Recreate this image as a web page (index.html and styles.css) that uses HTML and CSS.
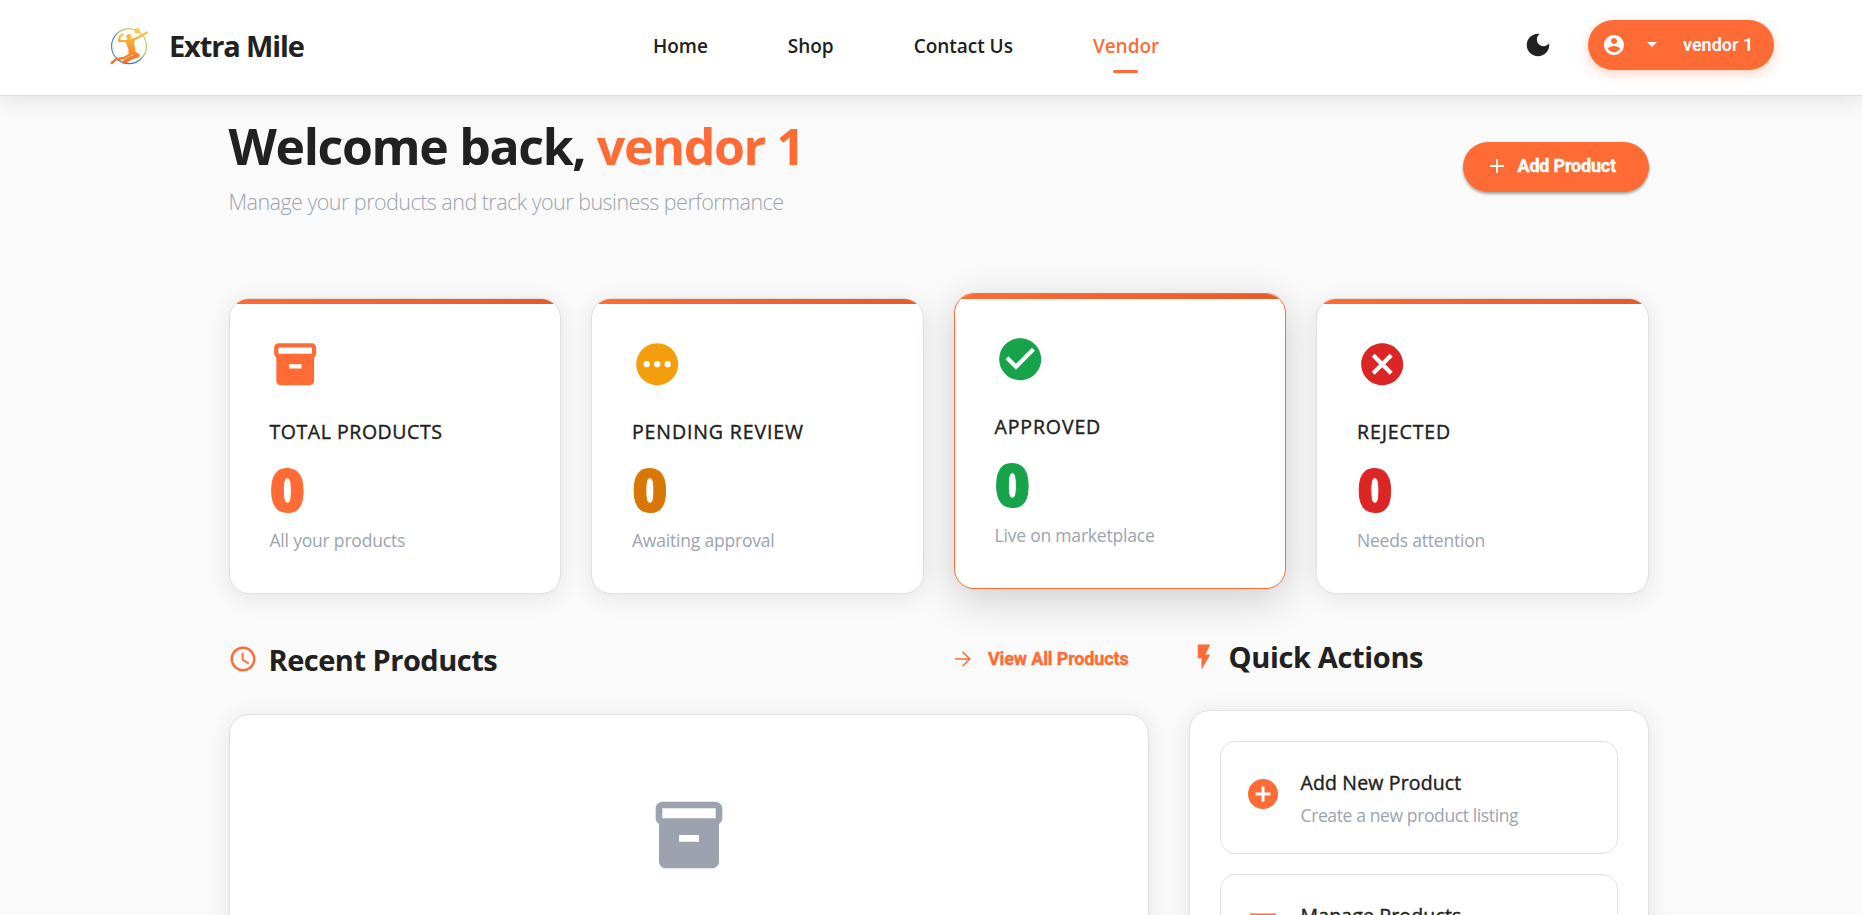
FILE: index.html
```html
<!DOCTYPE html>
<html lang="en">
<head>
<meta charset="utf-8">
<title>Extra Mile</title>
<link rel="stylesheet" href="styles.css">
</head>
<body>
<header class="topbar">
  <div class="brand">
    <svg class="brand-logo" viewBox="0 0 40 40" width="40" height="40">
      <defs>
        <linearGradient id="ring" x1="1" y1="0" x2="0" y2="1"><stop offset="0" stop-color="#f3c545"/><stop offset=".4" stop-color="#a9b060"/><stop offset=".6" stop-color="#3f6fb0"/><stop offset="1" stop-color="#4d83c9"/></linearGradient>
        <linearGradient id="body" gradientUnits="userSpaceOnUse" x1="0" y1="2" x2="0" y2="38"><stop offset="0" stop-color="#fbd04e"/><stop offset=".5" stop-color="#f99c32"/><stop offset="1" stop-color="#f56f24"/></linearGradient>
      </defs>
      <circle cx="20" cy="20.200" r="17.400" fill="none" stroke="url(#ring)" stroke-width="1.100"/>
      <g fill="url(#body)" stroke="url(#body)" stroke-linecap="round" stroke-linejoin="round">
        <circle cx="28.300" cy="4.700" r="2.700" stroke="none"/>
        <circle cx="19.800" cy="10.600" r="2.500" stroke="none"/>
        <path d="M25 13.500L31.500 10 38 6.500M18 15L10 14.800l.8-4.300 2.500-2" fill="none" stroke-width="2.200"/>
        <path d="M16.500 14.500L25.500 12.500l-1 6 1.500 8-5.500 3-.5-7z" stroke-width="1.400"/>
        <path d="M23 26l6 3.500-7.500 2.500-6.500 4.300" fill="none" stroke-width="3.800"/>
        <path d="M21 28.500L15 32l-8 1.300-4.300 3.700" fill="none" stroke-width="2.400"/>
      </g>
    </svg>
    <span class="brand-name">Extra Mile</span>
  </div>
  <nav class="nav">
    <a class="nav-link">Home</a><a class="nav-link">Shop</a><a class="nav-link">Contact Us</a><a class="nav-link active">Vendor</a>
  </nav>
  <div class="tools">
    <svg class="moon" viewBox="0 0 24 24"><path d="M12 3c-4.970 0-9 4.030-9 9s4.030 9 9 9 9-4.030 9-9c0-.46-.04-.92-.1-1.360-.98 1.370-2.580 2.260-4.400 2.260-2.980 0-5.400-2.420-5.400-5.400 0-1.810.89-3.420 2.260-4.400-.44-.06-.9-.1-1.360-.1z"/></svg>
    <button class="pill user">
      <svg class="user-icon" viewBox="0 0 24 24"><path d="M12 2C6.480 2 2 6.480 2 12s4.480 10 10 10 10-4.480 10-10S17.520 2 12 2zm0 3c1.660 0 3 1.340 3 3s-1.340 3-3 3-3-1.340-3-3 1.340-3 3-3zm0 14.200c-2.500 0-4.710-1.280-6-3.220.03-1.990 4-3.080 6-3.080 1.990 0 5.970 1.090 6 3.080-1.290 1.940-3.500 3.220-6 3.220z"/></svg>
      <svg class="caret" viewBox="0 0 10 5"><path d="M0 0h10L5 5z"/></svg>
      <span class="user-name">vendor 1</span>
    </button>
  </div>
</header>
<main class="page">
  <section class="hero">
    <div>
      <h1 class="hero-title">Welcome back, <span class="accent">vendor 1</span></h1>
      <p class="hero-sub">Manage your products and track your business performance</p>
    </div>
    <button class="pill add">
      <svg class="plus" viewBox="0 0 14 14"><path d="M7 0v14M0 7h14"/></svg>
      <span class="add-label">Add Product</span>
    </button>
  </section>
  <section class="stats">
    <article class="card stat orange">
      <svg class="stat-icon" viewBox="0 0 24 24"><path d="M20 2H4c-1 0-2 .9-2 2v3.010c0 .72.43 1.340 1 1.690V20c0 1.100 1.100 2 2 2h14c.9 0 2-.9 2-2V8.700c.57-.35 1-.97 1-1.690V4c0-1.100-1-2-2-2zm-5 12H9v-2h6v2zm5-7H4V4h16v3z"/></svg>
      <h3 class="stat-title">TOTAL PRODUCTS</h3><div class="stat-value">0</div><p class="stat-note">All your products</p>
    </article>
    <article class="card stat amber">
      <svg class="stat-icon" viewBox="0 0 24 24"><path fill-rule="evenodd" d="M12 2a10 10 0 1 0 0 20 10 10 0 0 0 0-20zM7 13.500a1.500 1.500 0 1 1 0-3 1.500 1.500 0 0 1 0 3zm5 0a1.500 1.500 0 1 1 0-3 1.500 1.500 0 0 1 0 3zm5 0a1.500 1.500 0 1 1 0-3 1.500 1.500 0 0 1 0 3z"/></svg>
      <h3 class="stat-title">PENDING REVIEW</h3><div class="stat-value">0</div><p class="stat-note">Awaiting approval</p>
    </article>
    <article class="card stat green raised">
      <svg class="stat-icon" viewBox="0 0 24 24"><path d="M12 2C6.480 2 2 6.480 2 12s4.480 10 10 10 10-4.480 10-10S17.520 2 12 2zm-2 15l-5-5 1.410-1.410L10 14.170l7.590-7.590L19 8l-9 9z"/></svg>
      <h3 class="stat-title">APPROVED</h3><div class="stat-value">0</div><p class="stat-note">Live on marketplace</p>
    </article>
    <article class="card stat red">
      <svg class="stat-icon" viewBox="0 0 24 24"><path d="M12 2C6.470 2 2 6.470 2 12s4.470 10 10 10 10-4.470 10-10S17.530 2 12 2zm5 13.590L15.590 17 12 13.410 8.410 17 7 15.590 10.590 12 7 8.410 8.410 7 12 10.590 15.590 7 17 8.410 13.410 12 17 15.590z"/></svg>
      <h3 class="stat-title">REJECTED</h3><div class="stat-value">0</div><p class="stat-note">Needs attention</p>
    </article>
  </section>
  <section class="panels">
    <div class="recent">
      <div class="panel-head">
        <svg class="clock" viewBox="0 0 24 24"><path d="M11.990 2C6.470 2 2 6.480 2 12s4.470 10 9.990 10C17.520 22 22 17.520 22 12S17.520 2 11.990 2zM12 20c-4.420 0-8-3.580-8-8s3.580-8 8-8 8 3.580 8 8-3.580 8-8 8zm.5-13H11v6l5.250 3.150.75-1.230-4.500-2.670z"/></svg>
        <h2 class="panel-title">Recent Products</h2>
        <a class="view-all"><svg class="arrow" viewBox="0 0 16 16"><path d="M0 8h14.500M7.500 .8L14.800 8l-7.300 7.200"/></svg><span class="view-label">View All Products</span></a>
      </div>
      <div class="card recent-card">
        <svg class="empty-icon" viewBox="0 0 24 24"><path d="M20 2H4c-1 0-2 .9-2 2v3.010c0 .72.43 1.340 1 1.690V20c0 1.100 1.100 2 2 2h14c.9 0 2-.9 2-2V8.700c.57-.35 1-.97 1-1.690V4c0-1.100-1-2-2-2zm-5 12H9v-2h6v2zm5-7H4V4h16v3z"/></svg>
      </div>
    </div>
    <div class="quick">
      <div class="panel-head">
        <svg class="bolt" viewBox="0 0 24 24"><path d="M7 2v11h3v9l7-12h-4l4-8z"/></svg>
        <h2 class="panel-title quick-title">Quick Actions</h2>
      </div>
      <div class="card quick-card">
        <a class="action">
          <svg class="action-icon" viewBox="0 0 24 24"><path d="M12 2C6.480 2 2 6.480 2 12s4.480 10 10 10 10-4.480 10-10S17.520 2 12 2zm5 11h-4v4h-2v-4H7v-2h4V7h2v4h4v2z"/></svg>
          <div><h4 class="action-title">Add New Product</h4><p class="action-note">Create a new product listing</p></div>
        </a>
        <a class="action">
          <svg class="action-icon" viewBox="0 0 24 24"><path d="M3.300 3h17.400v4.500h-17.400zM3.300 9.700h17.400v4.500h-17.400zM3.300 16h17.400v4.500h-17.400z"/></svg>
          <div><h4 class="action-title">Manage Products</h4></div>
        </a>
      </div>
    </div>
  </section>
</main>
</body>
</html>
```
FILE: styles.css
```css
* { box-sizing: border-box; }
html { overflow: hidden; }
body { margin: 0; height: 915px; overflow: hidden; background: #fafafa; color: #212121; font-family: "Open Sans", "Noto Sans", sans-serif; }
h1, h2, h3, h4, p { margin: 0; }
button { border: 0; padding: 0; font: inherit; }
svg { display: block; flex: none; }

.topbar { position: relative; z-index: 2; display: grid; grid-template-columns: 544px 1fr auto; height: 96px; padding: 0 88px 0 109px; background: #fff; border-bottom: 1px solid #e0e0e0; box-shadow: 0 4px 20px rgba(0,0,0,.1); }
.brand { display: flex; align-items: center; gap: 20px; height: 91px; }
.brand-name { padding-top: 1px; font-size: 29px; font-weight: 700; line-height: 40px; letter-spacing: -1.120px; white-space: nowrap; }
.nav { display: flex; gap: 80px; padding-top: 31px; }
.nav-link { font-size: 19px; font-weight: 600; line-height: 31px; letter-spacing: -.03px; white-space: nowrap; }
.nav-link.active { position: relative; color: #ff6b35; }
.nav-link.active::after { content: ""; position: absolute; left: 20px; top: 39px; width: 25px; height: 3px; border-radius: 2px; background: #ff6b35; }
.tools { display: flex; gap: 35px; padding-top: 20px; }
.moon { width: 30px; height: 30px; margin-top: 10px; fill: #212121; }
.pill { display: flex; width: 186px; height: 50px; border-radius: 25px; background: #ff6b35; color: #fff; font-family: Roboto, sans-serif; line-height: 50px; white-space: nowrap; }
.user { box-shadow: 0 4px 12px rgba(255,107,53,.3); }
.user-icon { width: 24px; height: 24px; margin: 12.500px 0 0 14px; fill: #fff; }
.caret { width: 10px; height: 5px; margin: 22px 0 0 21px; fill: #fff; }
.user-name { margin-left: 26px; font-size: 18px; font-weight: 600; }

.page { width: 1420px; margin-left: 228.500px; }
.hero { display: flex; justify-content: space-between; height: 202px; padding-top: 20px; }
.hero-title { font-size: 50px; font-weight: 700; line-height: 60px; letter-spacing: -1.350px; white-space: nowrap; }
.accent { color: #ff6b35; }
.hero-sub { margin-top: 11px; font-size: 21.500px; font-weight: 300; line-height: 30px; letter-spacing: -.53px; color: #9ca3af; white-space: nowrap; }
.add { margin-top: 26px; box-shadow: 0 2px 3px rgba(0,0,0,.35); }
.plus { width: 14px; height: 14px; margin: 17px 0 0 27px; stroke: #fff; stroke-width: 1.800; }
.add-label { margin-left: 14px; font-size: 18px; font-weight: 700; line-height: 48px; letter-spacing: -.2px; -webkit-text-stroke: .4px #fff; }

.card { background: #fff; border: 1px solid #e0e0e0; border-radius: 20px; box-shadow: 0 4px 24px rgba(0,0,0,.09); }
.stats { display: grid; grid-template-columns: repeat(4, 1fr); gap: 30px; }
.stat { position: relative; height: 296px; padding: 40px; overflow: hidden; }
.stat::before { content: ""; position: absolute; left: 0; right: 0; top: 0; height: 5px; background: linear-gradient(90deg, #ff6b35, #e55a2b); }
.stat.raised { transform: translateY(-5px); border-color: #ff6b35; box-shadow: 0 10px 40px rgba(0,0,0,.18); }
.stat-icon { width: 50.400px; height: 50.400px; fill: currentColor; }
.stat-title { margin-top: 27.600px; font-size: 19.500px; font-weight: 400; line-height: 30px; letter-spacing: .88px; color: #212121; white-space: nowrap; -webkit-text-stroke: .4px #212121; }
.orange .stat-title { letter-spacing: .55px; }
.stat-value { margin-top: 12px; font-size: 61px; font-weight: 800; line-height: 60px; -webkit-text-stroke: 1px currentColor; }
.stat-note { margin-top: 8px; font-size: 17.500px; line-height: 27px; letter-spacing: -.2px; color: #9ca3af; }
.orange { color: #ff6b35; }
.amber { color: #f59e0b; }
.amber .stat-value { color: #d97706; }
.green { color: #16a34a; }
.red { color: #dc2626; }

.panels { display: grid; grid-template-columns: 920px 460px; gap: 40px; }
.panel-head { display: flex; }
.panel-title { font-size: 29px; font-weight: 700; line-height: 40px; letter-spacing: -.5px; white-space: nowrap; }
.quick-title { letter-spacing: -.35px; }
.recent { padding-top: 46px; }
.recent .panel-head { height: 74px; }
.clock { width: 30px; height: 30px; margin: 4px 11px 0 -1px; fill: #ff6b35; }
.view-all { display: flex; margin-left: auto; margin-right: 20px; color: #ff6b35; font-family: Roboto, sans-serif; }
.arrow { width: 16px; height: 16px; margin: 10.500px 17px 0 0; fill: none; stroke: #ff6b35; stroke-width: 1.600; }
.view-label { font-size: 18px; font-weight: 700; line-height: 38px; letter-spacing: -.15px; white-space: nowrap; -webkit-text-stroke: .4px #ff6b35; }
.recent-card { height: 420px; padding-top: 80px; }
.empty-icon { width: 80px; height: 80px; margin: 0 auto; fill: #9ca3af; }
.quick { padding-top: 43px; }
.quick .panel-head { height: 72.500px; }
.bolt { width: 30px; height: 30px; margin: 5px 10px 0 0; fill: #ff6b35; }
.quick-card { height: 420px; padding: 30px; }
.action { display: flex; height: 113px; margin-bottom: 20px; padding: 25px 24px; border: 1px solid #e0e0e0; border-radius: 15px; }
.action-icon { width: 36px; height: 36px; margin: 9.500px 20px 0 0; fill: #ff6b35; }
.action-title { font-size: 19.500px; font-weight: 400; line-height: 32px; letter-spacing: .15px; white-space: nowrap; -webkit-text-stroke: .4px #212121; }
.action-note { font-size: 17.500px; line-height: 32px; letter-spacing: -.38px; color: #9ca3af; white-space: nowrap; }
```
